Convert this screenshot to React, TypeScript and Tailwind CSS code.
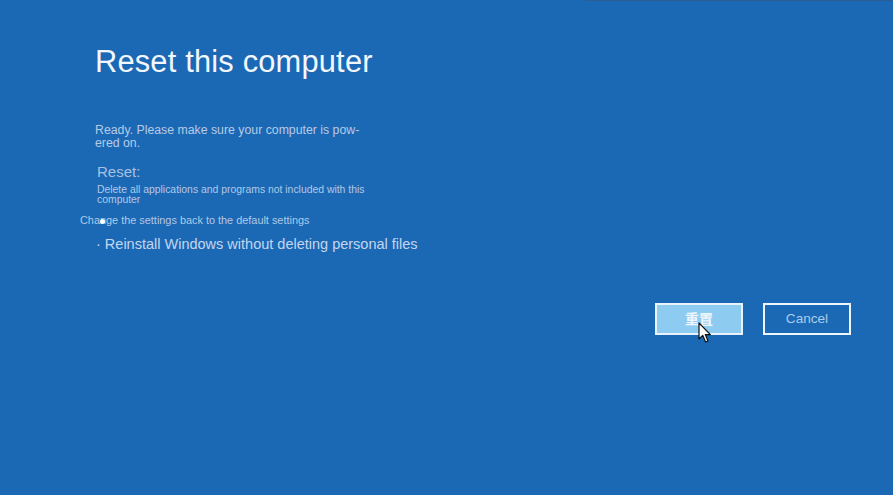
export default function App() {
  return (
    <div
      className="relative w-[893px] h-[495px] overflow-hidden bg-[#1b68b5] text-white"
      style={{ fontFamily: '"Liberation Sans", Arial, "Noto Sans CJK SC", sans-serif' }}
    >
      <div className="absolute top-0 left-[585px] right-0 h-px bg-[#2a5d94]" />
      <div className="flex flex-col pl-[95px] pt-[44px]">
        <h1 className="text-[30.8px] leading-[36px] text-[#f2f7fd] tracking-[0.2px]">Reset this computer</h1>
        <p className="mt-[44px] w-[275px] text-[12.3px] leading-[13px] text-[#b7cbe6]">
          Ready. Please make sure your computer is pow-
          <br />
          ered on.
        </p>
        <div className="mt-[13px] ml-[2px] text-[15px] leading-[18px] text-[#a7c0e0]">Reset:</div>
        <p className="mt-[4px] ml-[2px] text-[10.4px] leading-[10px] text-[#b2c8e6]">
          Delete all applications and programs not included with this
          <br />
          computer
        </p>
        <div className="relative mt-[9px] -ml-[15px] text-[10.9px] leading-[13px] text-[#b2c8e6]">
          Change the settings back to the default settings
          <span className="absolute left-[20px] top-[5px] w-[5px] h-[5px] rounded-full bg-white" />
        </div>
        <div className="mt-[8px] ml-[1px] text-[14.5px] leading-[18px] text-[#c3d6ef]">
          · Reinstall Windows without deleting personal files
        </div>
      </div>
      <div className="flex justify-end gap-[20px] pr-[42px] mt-[50px]">
        <div className="relative flex items-center justify-center w-[88px] h-[32px] border-2 border-[#e8f3fb] bg-[#8ecbf0] text-[14px] font-bold text-[#eef7fd]">
          重置
          <svg className="absolute left-[41px] top-[17px]" width="14" height="22" viewBox="0 0 14 22">
            <path d="M1 1 L1 17 L4.8 13.4 L7.6 20 L10 19 L7.3 12.6 L12.4 12.6 Z" fill="#ffffff" stroke="#111" strokeWidth="1.2" strokeLinejoin="round" />
          </svg>
        </div>
        <div className="flex items-center justify-center w-[88px] h-[32px] border-2 border-[#eef5fb] text-[13.6px] text-[#a9cdef]">
          Cancel
        </div>
      </div>
    </div>
  );
}
